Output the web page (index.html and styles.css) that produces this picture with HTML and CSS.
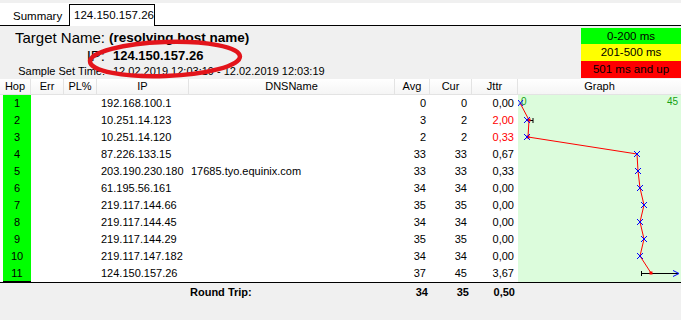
FILE: index.html
```html
<!DOCTYPE html>
<html lang="en">

<head>
    <meta charset="UTF-8">
    <title>124.150.157.26</title>
    <link rel="stylesheet" href="styles.css">
</head>

<body>
    <div class="tabs">
        <div class="tab">Summary</div>
        <div class="tab active">124.150.157.26</div>
    </div>

    <div class="summary">
        <div class="target">
            <div class="label big">Target Name:</div>
            <div class="value host">(resolving host name)</div>
            <div class="label big">IP:</div>
            <div class="value ip">124.150.157.26</div>
            <div class="label">Sample Set Time:</div>
            <div class="value time">12.02.2019 12:03:19 - 12.02.2019 12:03:19</div>
        </div>
        <div class="legend">
            <div class="fast">0-200 ms</div>
            <div class="mid">201-500 ms</div>
            <div class="slow">501 ms and up</div>
        </div>
        <!-- red marker drawn over the IP -->
        <svg class="marker" width="160" height="44" viewBox="0 0 160 44">
            <ellipse cx="79" cy="21" rx="75" ry="17" transform="rotate(-2 79 21)" fill="none" stroke="#e3141b" stroke-width="4.5"/>
        </svg>
    </div>

    <div class="hops">
        <div class="th">Hop</div>
        <div class="th">Err</div>
        <div class="th">PL%</div>
        <div class="th">IP</div>
        <div class="th">DNSName</div>
        <div class="th">Avg</div>
        <div class="th">Cur</div>
        <div class="th">Jttr</div>
        <div class="th last">Graph</div>

        <div class="hop">1</div><div></div><div></div><div class="ip">192.168.100.1</div><div class="dns"></div><div class="avg">0</div><div class="cur">0</div><div class="jit">0,00</div>
        <div class="hop">2</div><div></div><div></div><div class="ip">10.251.14.123</div><div class="dns"></div><div class="avg">3</div><div class="cur">2</div><div class="jit red">2,00</div>
        <div class="hop">3</div><div></div><div></div><div class="ip">10.251.14.120</div><div class="dns"></div><div class="avg">2</div><div class="cur">2</div><div class="jit red">0,33</div>
        <div class="hop">4</div><div></div><div></div><div class="ip">87.226.133.15</div><div class="dns"></div><div class="avg">33</div><div class="cur">33</div><div class="jit">0,67</div>
        <div class="hop">5</div><div></div><div></div><div class="ip">203.190.230.180</div><div class="dns">17685.tyo.equinix.com</div><div class="avg">33</div><div class="cur">33</div><div class="jit">0,33</div>
        <div class="hop">6</div><div></div><div></div><div class="ip">61.195.56.161</div><div class="dns"></div><div class="avg">34</div><div class="cur">34</div><div class="jit">0,00</div>
        <div class="hop">7</div><div></div><div></div><div class="ip">219.117.144.66</div><div class="dns"></div><div class="avg">35</div><div class="cur">35</div><div class="jit">0,00</div>
        <div class="hop">8</div><div></div><div></div><div class="ip">219.117.144.45</div><div class="dns"></div><div class="avg">34</div><div class="cur">34</div><div class="jit">0,00</div>
        <div class="hop">9</div><div></div><div></div><div class="ip">219.117.144.29</div><div class="dns"></div><div class="avg">35</div><div class="cur">35</div><div class="jit">0,00</div>
        <div class="hop">10</div><div></div><div></div><div class="ip">219.117.147.182</div><div class="dns"></div><div class="avg">34</div><div class="cur">34</div><div class="jit">0,00</div>
        <div class="hop end">11</div><div></div><div></div><div class="ip">124.150.157.26</div><div class="dns"></div><div class="avg">37</div><div class="cur">45</div><div class="jit">3,67</div>

        <div class="graph">
            <svg width="163" height="187" viewBox="0 0 163 187">
                <text x="3" y="10" class="scale">0</text>
                <text x="160" y="10" class="scale" text-anchor="end">45</text>
                <!-- jitter bars -->
                <g stroke="#000" stroke-width="1">
                    <path d="M9 25.5 H15 M15 23 V28"/>
                    <path d="M123 178.5 H160 M123.5 176 V181"/>
                </g>
                <path d="M155 175.5 L161 178.5 L155 181.5" fill="none" stroke="#0000ff"/>
                <polyline fill="none" stroke="#ff0000" stroke-width="1"
                    points="2,8 11,25 10,42 119,59 120,76 122,93 126,110 122,127 126,144 122,161 133,178"/>
                <g fill="#ff0000">
                    <rect x="9.5" y="23.5" width="3" height="3"/>
                    <rect x="8.5" y="40.5" width="3" height="3"/>
                    <rect x="131.5" y="176.5" width="3" height="3"/>
                </g>
                <g stroke="#0000ff" stroke-width="1" fill="none">
                    <path d="M0 5 L5 11 M5 5 L0 11"/>
                    <path d="M6 22 L12 28 M12 22 L6 28"/>
                    <path d="M6 39 L12 45 M12 39 L6 45"/>
                    <path d="M116 56 L122 62 M122 56 L116 62"/>
                    <path d="M117 73 L123 79 M123 73 L117 79"/>
                    <path d="M119 90 L125 96 M125 90 L119 96"/>
                    <path d="M123 107 L129 113 M129 107 L123 113"/>
                    <path d="M119 124 L125 130 M125 124 L119 130"/>
                    <path d="M123 141 L129 147 M129 141 L123 147"/>
                    <path d="M119 158 L125 164 M125 158 L119 164"/>
                </g>
            </svg>
        </div>
    </div>

    <div class="hops total">
        <div class="trip">Round Trip:</div>
        <div class="avg">34</div>
        <div class="cur">35</div>
        <div class="jit">0,50</div>
    </div>
</body>

</html>
```

FILE: styles.css
```css
:root {
    --panel: #f0f0f0;
    --hop-green: #00ff00;
    --graph-bg: #dcfcdc;
    --grid-line: #e3e3e3;
    --font-family: 'Liberation Sans', Arial, sans-serif;
}

body {
    margin: 0;
    background-color: var(--panel);
    font-family: var(--font-family);
    font-size: 11px;
    color: #000;
}

/* tab strip */
.tabs {
    display: flex;
    align-items: flex-end;
    height: 26px;
    box-sizing: border-box;
    padding-left: 3px;
    background: #fff;
    border-top: 3px solid var(--panel);
    border-bottom: 1px solid #000;
}

.tab {
    width: 66px;
    height: 18px;
    line-height: 18px;
    box-sizing: border-box;
    padding-left: 10px;
    font-size: 11.5px;
}

.tab.active {
    width: 86px;
    height: 22px;
    line-height: 20px;
    padding-left: 4px;
    margin-bottom: -1px;
    border: 1px solid #000;
    border-bottom: none;
    background: #fff;
}

/* target info */
.summary {
    position: relative;
    display: flex;
    justify-content: space-between;
    height: 53px;
}

.target {
    display: grid;
    grid-template-columns: 105px auto;
    grid-template-rows: 18px 18px 14px;
    column-gap: 4px;
    align-items: center;
    padding-top: 2px;
}

.label {
    text-align: right;
    white-space: nowrap;
}

.label.big {
    font-size: 15px;
}

.value {
    white-space: nowrap;
}

.value.host {
    font-weight: bold;
    font-size: 13.5px;
}

.value.ip {
    font-weight: bold;
    font-size: 13px;
    padding-left: 4px;
}

.value.time {
    padding-left: 4px;
}

.legend {
    width: 100px;
    margin-top: 2px;
    text-align: center;
    font-size: 11.5px;
}

.legend .fast {
    background: #00ff00;
    height: 16px;
    line-height: 16px;
}

.legend .mid {
    background: #ffff00;
    height: 17px;
    line-height: 17px;
}

.legend .slow {
    background: #ff0000;
    height: 17px;
    line-height: 17px;
}

.marker {
    position: absolute;
    left: 86px;
    top: 12px;
}

/* hop table */
.hops {
    display: grid;
    grid-template-columns: 31px 33px 33px 92px 206px 35px 42px 46px 163px;
    grid-template-rows: 16px;
    grid-auto-rows: 17px;
    background: #fff;
    line-height: 17px;
    white-space: nowrap;
}

.th {
    box-sizing: border-box;
    line-height: 15px;
    text-align: center;
    background: linear-gradient(#ffffff, #f5f5f5);
    border-right: 1px solid var(--grid-line);
    border-bottom: 1px solid var(--grid-line);
}

.th.last {
    border-right: none;
}

.hop {
    margin-left: 3px;
    text-align: center;
    background: var(--hop-green);
}

.hop.end {
    box-shadow: inset 0 -1px 0 #000;
}

.ip {
    padding-left: 4px;
}

.dns {
    padding-left: 2px;
}

.avg {
    text-align: right;
    padding-right: 4px;
}

.cur {
    text-align: right;
    padding-right: 5px;
}

.jit {
    text-align: right;
    padding-right: 4px;
}

.red {
    color: #ff0000;
}

.graph {
    grid-column: 9;
    grid-row: 2 / span 11;
    background: var(--graph-bg);
}

.graph svg {
    display: block;
}

.scale {
    font-family: var(--font-family);
    font-size: 10px;
    fill: #14a014;
}

/* round trip footer */
.hops.total {
    grid-template-rows: 18px;
    line-height: 18px;
    background: var(--panel);
    border-top: 1px solid #000;
    font-weight: bold;
}

.trip {
    grid-column: 5;
    padding-left: 1px;
}

.total .avg {
    grid-column: 6;
    padding-right: 2px;
}

.total .cur {
    padding-right: 3px;
}

.total .jit {
    padding-right: 3px;
}
```
